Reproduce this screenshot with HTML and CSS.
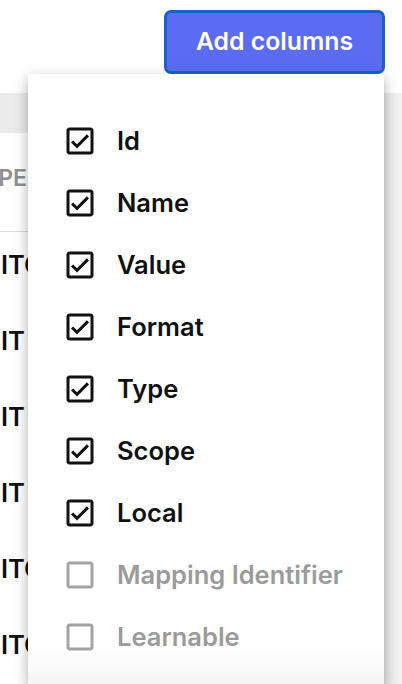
FILE: index.html
```html
<!DOCTYPE html>
<html lang="en">
<head>
<meta charset="utf-8">
<title>Add columns</title>
<link rel="stylesheet" href="styles.css">
</head>
<body>
<div class="page">
  <header class="toolbar">
    <button class="btn-add" type="button">Add columns</button>
  </header>
  <div class="table">
    <div class="table-main">
      <div class="band"></div>
      <div class="head-row"><span class="cell head">TYPE</span></div>
      <div class="row"><span class="cell">ITCH</span></div>
      <div class="row"><span class="cell">IT</span></div>
      <div class="row"><span class="cell">IT</span></div>
      <div class="row"><span class="cell">IT</span></div>
      <div class="row"><span class="cell">ITCH</span></div>
      <div class="row"><span class="cell">ITCH</span></div>
    </div>
    <div class="table-side"></div>
  </div>

  <div class="menu">
    <label class="item"><svg class="cb" viewBox="0 0 24 24"><path d="M19 3H5c-1.11 0-2 .9-2 2v14c0 1.1.89 2 2 2h14c1.11 0 2-.9 2-2V5c0-1.1-.89-2-2-2zm0 16H5V5h14v14zM17.99 9l-1.41-1.42-6.59 6.59-2.58-2.57-1.42 1.41 4 3.99z"/></svg><span>Id</span></label>
    <label class="item"><svg class="cb" viewBox="0 0 24 24"><path d="M19 3H5c-1.11 0-2 .9-2 2v14c0 1.1.89 2 2 2h14c1.11 0 2-.9 2-2V5c0-1.1-.89-2-2-2zm0 16H5V5h14v14zM17.99 9l-1.41-1.42-6.59 6.59-2.58-2.57-1.42 1.41 4 3.99z"/></svg><span>Name</span></label>
    <label class="item"><svg class="cb" viewBox="0 0 24 24"><path d="M19 3H5c-1.11 0-2 .9-2 2v14c0 1.1.89 2 2 2h14c1.11 0 2-.9 2-2V5c0-1.1-.89-2-2-2zm0 16H5V5h14v14zM17.99 9l-1.41-1.42-6.59 6.59-2.58-2.57-1.42 1.41 4 3.99z"/></svg><span>Value</span></label>
    <label class="item"><svg class="cb" viewBox="0 0 24 24"><path d="M19 3H5c-1.11 0-2 .9-2 2v14c0 1.1.89 2 2 2h14c1.11 0 2-.9 2-2V5c0-1.1-.89-2-2-2zm0 16H5V5h14v14zM17.99 9l-1.41-1.42-6.59 6.59-2.58-2.57-1.42 1.41 4 3.99z"/></svg><span>Format</span></label>
    <label class="item"><svg class="cb" viewBox="0 0 24 24"><path d="M19 3H5c-1.11 0-2 .9-2 2v14c0 1.1.89 2 2 2h14c1.11 0 2-.9 2-2V5c0-1.1-.89-2-2-2zm0 16H5V5h14v14zM17.99 9l-1.41-1.42-6.59 6.59-2.58-2.57-1.42 1.41 4 3.99z"/></svg><span>Type</span></label>
    <label class="item"><svg class="cb" viewBox="0 0 24 24"><path d="M19 3H5c-1.11 0-2 .9-2 2v14c0 1.1.89 2 2 2h14c1.11 0 2-.9 2-2V5c0-1.1-.89-2-2-2zm0 16H5V5h14v14zM17.99 9l-1.41-1.42-6.59 6.59-2.58-2.57-1.42 1.41 4 3.99z"/></svg><span>Scope</span></label>
    <label class="item"><svg class="cb" viewBox="0 0 24 24"><path d="M19 3H5c-1.11 0-2 .9-2 2v14c0 1.1.89 2 2 2h14c1.11 0 2-.9 2-2V5c0-1.1-.89-2-2-2zm0 16H5V5h14v14zM17.99 9l-1.41-1.42-6.59 6.59-2.58-2.57-1.42 1.41 4 3.99z"/></svg><span>Local</span></label>
    <label class="item disabled"><svg class="cb" viewBox="0 0 24 24"><path d="M19 5v14H5V5h14m0-2H5c-1.1 0-2 .9-2 2v14c0 1.1.9 2 2 2h14c1.1 0 2-.9 2-2V5c0-1.1-.9-2-2-2z"/></svg><span>Mapping Identifier</span></label>
    <label class="item disabled"><svg class="cb" viewBox="0 0 24 24"><path d="M19 5v14H5V5h14m0-2H5c-1.1 0-2 .9-2 2v14c0 1.1.9 2 2 2h14c1.1 0 2-.9 2-2V5c0-1.1-.9-2-2-2z"/></svg><span>Learnable</span></label>
  </div>
</div>
</body>
</html>
```

FILE: styles.css
```css
* { box-sizing: border-box; }

html, body {
  margin: 0;
  padding: 0;
  height: 100%;
  overflow: hidden;
  background: #ffffff;
  font-family: Inter, Roboto, "Liberation Sans", Arial, sans-serif;
}

.page {
  position: relative;
  width: 402px;
  height: 684px;
  overflow: hidden;
  display: flex;
  flex-direction: column;
}

.toolbar {
  height: 74px;
  flex: none;
  display: flex;
  justify-content: flex-end;
  align-items: flex-start;
  padding: 10px 17px 0 0;
}

.btn-add {
  width: 221px;
  height: 64px;
  border: 3px solid #1a62c7;
  border-radius: 7px;
  background: #5b6cf3;
  color: #ffffff;
  font-family: Inter, Roboto, "Liberation Sans", Arial, sans-serif;
  font-weight: 600;
  font-size: 24.8px;
  line-height: 1;
  padding: 0 0 2px 0;
}

.table {
  flex: 1;
  display: flex;
  padding-top: 19px;
}

.table-main {
  flex: 1;
  display: flex;
  flex-direction: column;
}

.table-side {
  width: 18px;
  flex: none;
  background: linear-gradient(to right, #e9e9e9, #f2f2f2);
}

.band {
  height: 40px;
  background: #ebebeb;
}

.head-row {
  height: 99px;
  padding-top: 31px;
  border-bottom: 1px solid #dedede;
}

.row {
  height: 76px;
  padding-top: 19px;
}

.cell {
  display: flex;
  justify-content: flex-end;
  width: 27px;
  height: 28px;
  line-height: 28px;
  overflow: hidden;
  white-space: nowrap;
  font-weight: 600;
  font-size: 25.5px;
  color: #111111;
}

.row .cell {
  justify-content: flex-start;
  width: 60px;
  padding-left: 1px;
}

.cell.head {
  font-size: 23px;
  color: #8f8f8f;
}

.menu {
  position: absolute;
  top: 74px;
  left: 28px;
  width: 356px;
  bottom: 0;
  background: linear-gradient(to bottom, #ffffff 0, #ffffff 570px, #f5f5f5 610px);
  box-shadow: 0 5px 5px -3px rgba(0,0,0,0.2), 0 8px 10px 1px rgba(0,0,0,0.14), 0 3px 14px 2px rgba(0,0,0,0.12);
  padding-top: 36px;
  display: flex;
  flex-direction: column;
}

.item {
  height: 62px;
  flex: none;
  display: flex;
  align-items: center;
  padding-left: 34px;
  gap: 19px;
  font-weight: 600;
  font-size: 25.5px;
  color: #111111;
}

.item span {
  position: relative;
  top: -1px;
}

.cb {
  width: 36px;
  height: 36px;
  flex: none;
  fill: #111111;
}

.item.disabled {
  color: #9b9b9b;
}

.item.disabled .cb {
  fill: #a3a3a3;
}
```
